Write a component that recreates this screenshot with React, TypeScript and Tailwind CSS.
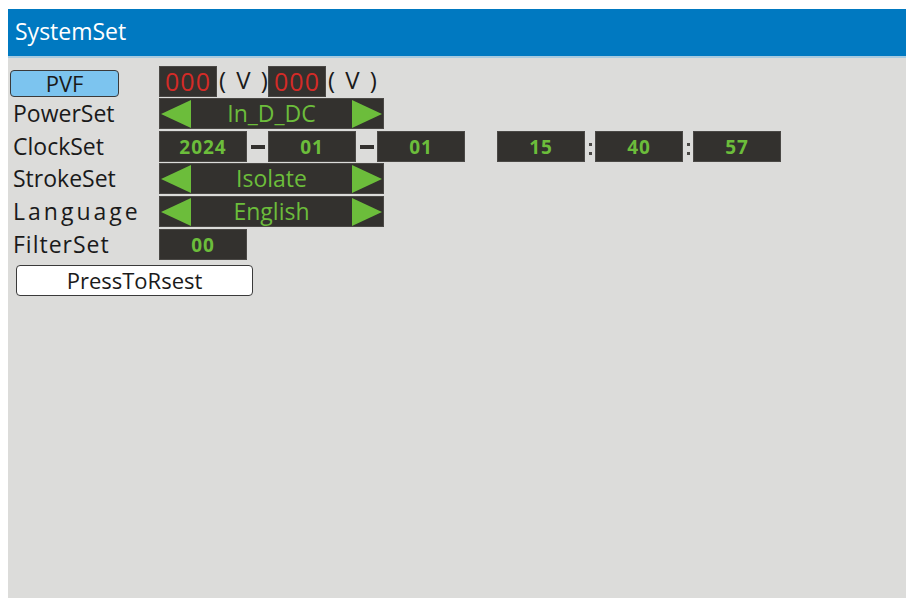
import React from 'react'

const font = { fontFamily: '"Open Sans", "Noto Sans", sans-serif' }

const boxCls = 'bg-[#33312e] border border-[#4a4845] flex items-center justify-center'
const labelCls = 'w-[151px] pl-[5px] text-[23px] leading-none text-[#1a1a1a] whitespace-nowrap'

function Arrow({ dir }: { dir: 'left' | 'right' }) {
  return (
    <svg width="30" height="28" viewBox="0 0 30 28" className="shrink-0">
      {dir === 'left' ? (
        <polygon points="0,14 30,0 30,28" fill="#6cbd3b" />
      ) : (
        <polygon points="0,0 30,14 0,28" fill="#6cbd3b" />
      )}
    </svg>
  )
}

function Selector({ value }: { value: string }) {
  return (
    <div className="w-[225px] h-[31px] bg-[#33312e] border border-[#4a4845] flex items-center justify-between px-px">
      <Arrow dir="left" />
      <span className="text-[23px] leading-none text-[#6cbd3b]">{value}</span>
      <Arrow dir="right" />
    </div>
  )
}

function NumBox({ value, w = 'w-[88px]' }: { value: string; w?: string }) {
  return (
    <div className={`${boxCls} ${w} h-[31px]`}>
      <span className="text-[19px] font-bold leading-none text-[#6cbd3b] tracking-[1px] mt-[2px]">{value}</span>
    </div>
  )
}

function Dash() {
  return (
    <div className="w-[21px] flex items-center justify-center">
      <div className="w-[14px] h-[4px] bg-[#33312e]" />
    </div>
  )
}

function Colon() {
  return (
    <div className="w-[10px] flex flex-col items-center justify-center gap-[6px] pt-[4px]">
      <div className="w-[3px] h-[3px] bg-[#4a4845]" />
      <div className="w-[3px] h-[3px] bg-[#4a4845]" />
    </div>
  )
}

function Volt({ value }: { value: string }) {
  return (
    <>
      <div className={`${boxCls} w-[58px] h-[31px]`}>
        <span className="text-[25px] leading-none text-[#d42b27] tracking-[1px]">{value}</span>
      </div>
      <span className="w-[51px] whitespace-pre text-[24px] leading-none text-[#1a1a1a] tracking-[2px] pl-[2px] -mt-[3px]">( V )</span>
    </>
  )
}

export default function App() {
  return (
    <div className="w-[906px] h-[598px] bg-white pl-[8px] pt-[9px]" style={font}>
      <div className="h-full bg-[#dcdcda] flex flex-col">
        {/* Titelleiste */}
        <div className="h-[49px] bg-[#0079c1] border-b-2 border-[#a9cbe0] flex items-center pl-[7px] pb-[3px]">
          <span className="text-white text-[23px] leading-none">SystemSet</span>
        </div>

        <div className="flex flex-col">
          {/* PVF */}
          <div className="flex items-end h-[31px] mt-[8px]">
            <div className="w-[151px] pl-[2px]">
              <div className="w-[109px] h-[27px] bg-[#7cc4ef] border border-[#3a3a3a] rounded-[4px] flex items-center justify-center">
                <span className="text-[22px] leading-none text-[#1a1a1a] -mt-[1px]">PVF</span>
              </div>
            </div>
            <div className="flex items-center">
              <Volt value="000" />
              <Volt value="000" />
            </div>
          </div>

          {/* PowerSet */}
          <div className="flex items-center h-[31px] mt-[1px]">
            <span className={labelCls}>PowerSet</span>
            <Selector value="In_D_DC" />
          </div>

          {/* ClockSet */}
          <div className="flex items-center h-[31px] mt-[2px]">
            <span className={labelCls}>ClockSet</span>
            <div className="flex h-[31px]">
              <NumBox value="2024" />
              <Dash />
              <NumBox value="01" />
              <Dash />
              <NumBox value="01" />
              <div className="w-[32px]" />
              <NumBox value="15" />
              <Colon />
              <NumBox value="40" />
              <Colon />
              <NumBox value="57" />
            </div>
          </div>

          {/* StrokeSet */}
          <div className="flex items-center h-[31px] mt-[1px]">
            <span className={labelCls}>StrokeSet</span>
            <Selector value="Isolate" />
          </div>

          {/* Language */}
          <div className="flex items-center h-[31px] mt-[2px]">
            <span className={`${labelCls} tracking-[3px]`}>Language</span>
            <Selector value="English" />
          </div>

          {/* FilterSet */}
          <div className="flex items-center h-[31px] mt-[2px]">
            <span className={`${labelCls} tracking-[1px]`}>FilterSet</span>
            <NumBox value="00" />
          </div>

          {/* Reset */}
          <div className="pl-[8px] mt-[5px]">
            <button className="w-[237px] h-[31px] bg-white border border-[#3a3a3a] rounded-[4px] flex items-center justify-center">
              <span className="text-[22px] leading-none text-[#1a1a1a] -mt-[1px]">PressToRsest</span>
            </button>
          </div>
        </div>
      </div>
    </div>
  )
}
